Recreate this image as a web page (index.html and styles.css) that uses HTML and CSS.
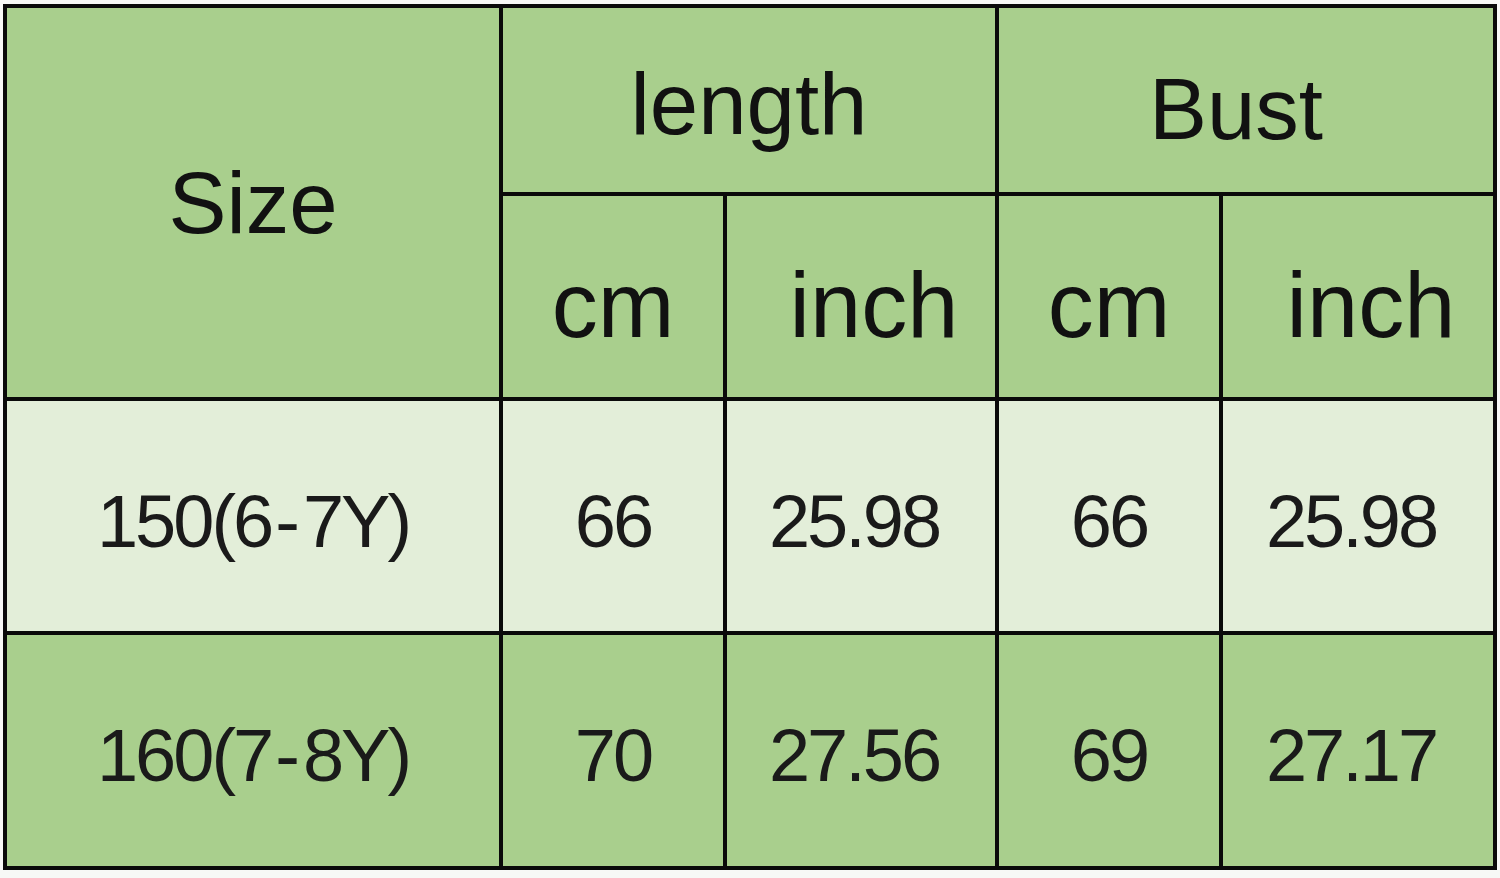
FILE: index.html
```html
<!DOCTYPE html>
<html lang="en">
<head>
<meta charset="utf-8">
<title>Size chart</title>
<link rel="stylesheet" href="styles.css">
</head>
<body>
<div class="chart">
  <div class="cell head size">Size</div>
  <div class="cell head group length">length</div>
  <div class="cell head group bust">Bust</div>
  <div class="cell head unit">cm</div>
  <div class="cell head unit inch">inch</div>
  <div class="cell head unit">cm</div>
  <div class="cell head unit inch">inch</div>

  <div class="cell light data">150(6<span class="dash">-</span>7Y)</div>
  <div class="cell light data">66</div>
  <div class="cell light data dec">25.98</div>
  <div class="cell light data">66</div>
  <div class="cell light data dec">25.98</div>

  <div class="cell green data">160(7<span class="dash">-</span>8Y)</div>
  <div class="cell green data">70</div>
  <div class="cell green data dec">27.56</div>
  <div class="cell green data">69</div>
  <div class="cell green data dec">27.17</div>
</div>
</body>
</html>
```
FILE: styles.css
```css
html, body {
  margin: 0;
  padding: 0;
  background: #f7f8f6;
}
body {
  padding: 4px 0 0 3px;
  width: 1500px;
  height: 878px;
  box-sizing: border-box;
  overflow: hidden;
}
.chart {
  display: grid;
  grid-template-columns: 492px 220px 268px 220px 270px;
  grid-template-rows: 184px 201px 230px 231px;
  gap: 4px;
  padding: 4px;
  background: #0a0a0a;
  width: 1494px;
  box-sizing: border-box;
  font-family: "Liberation Sans", Arial, sans-serif;
  color: #111;
}
.cell {
  display: flex;
  align-items: center;
  justify-content: center;
  white-space: nowrap;
  background: #a9cf8d;
}
.head {
  font-size: 87px;
}
.size {
  grid-row: 1 / span 2;
  grid-column: 1;
}
.length {
  grid-column: 2 / span 2;
  padding-top: 8px;
}
.bust {
  grid-column: 4 / span 2;
  padding-right: 20px;
  padding-top: 18px;
}
.unit {
  font-size: 92px;
  padding-top: 18px;
}
.unit.inch {
  padding-left: 26px;
}
.light {
  background: #e3eed9;
}
.green {
  background: #a9cf8d;
}
.data {
  font-size: 74px;
  letter-spacing: -3px;
  color: #1a1a1a;
  padding-top: 10px;
}
.data.dec {
  padding-right: 14px;
}
.dash {
  margin: 0 6px 0 4px;
}
```
